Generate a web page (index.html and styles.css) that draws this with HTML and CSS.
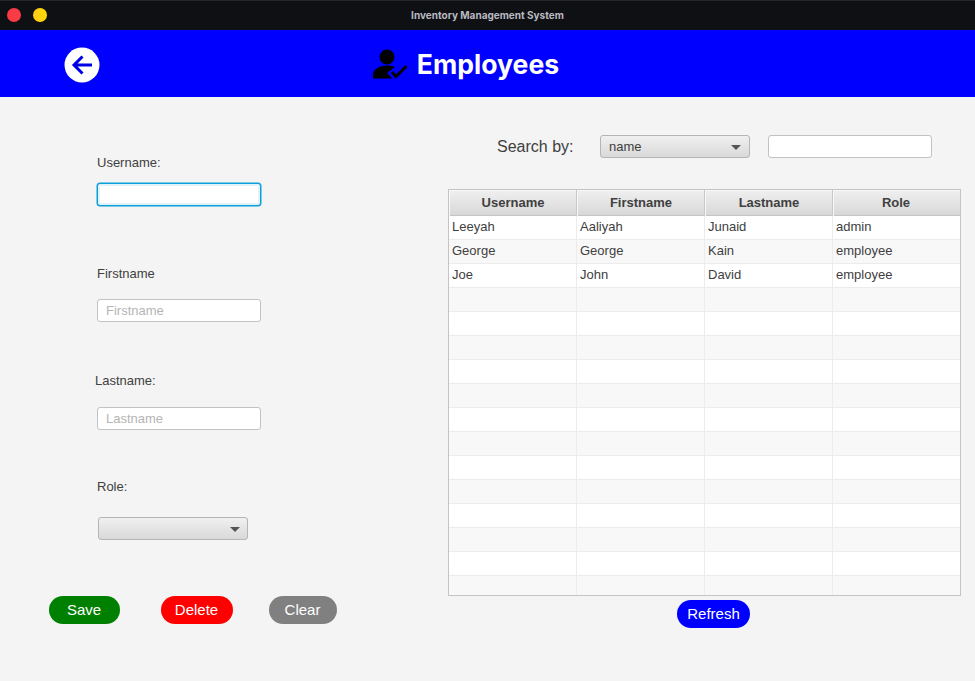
FILE: index.html
```html
<!DOCTYPE html>
<html lang="en">
<head>
<meta charset="utf-8">
<title>Inventory Management System</title>
<link rel="stylesheet" href="styles.css">
</head>
<body>
<div class="titlebar">
  <div class="lights"><span class="light red"></span><span class="light yellow"></span></div>
  <div class="wintitle">Inventory Management System</div>
</div>
<header class="header">
  <svg class="back" width="36" height="36" viewBox="0 0 36 36"><circle cx="18" cy="18" r="17.500" fill="#fff"/><path d="M28 18H11M18.500 9.500L10 18l8.500 8.500" fill="none" stroke="#0000e6" stroke-width="3"/></svg>
  <div class="heading">
    <svg class="usericon" width="36" height="32" viewBox="0 0 36 32"><circle cx="14" cy="8" r="7.500" fill="#000"/><path d="M0 29.500v-4c0-5 6-9 14-9 3 0 6 .5 8 1.500l-8 6 5.500 5.500z" fill="#000"/><path d="M19 23l4 4.500L33.500 17" fill="none" stroke="#000" stroke-width="3"/></svg>
    <h1>Employees</h1>
  </div>
</header>
<main class="main">
  <section class="form">
    <label class="lbl lbl-user">Username:</label>
    <input class="field focus" type="text">
    <label class="lbl lbl-first">Firstname</label>
    <input class="field" type="text" placeholder="Firstname">
    <label class="lbl lbl-last">Lastname:</label>
    <input class="field" type="text" placeholder="Lastname">
    <label class="lbl lbl-role">Role:</label>
    <div class="combo combo-role"><span></span><i class="arrow"></i></div>
    <div class="actions">
      <button class="pill save">Save</button>
      <button class="pill del">Delete</button>
      <button class="pill clear">Clear</button>
    </div>
  </section>
  <section class="side">
    <div class="search">
      <span class="searchlbl">Search by:</span>
      <div class="combo combo-search"><span>name</span><i class="arrow"></i></div>
      <input class="field searchbox" type="text">
    </div>
    <div class="table">
      <div class="row head"><div>Username</div><div>Firstname</div><div>Lastname</div><div>Role</div></div>
      <div class="row"><div>Leeyah</div><div>Aaliyah</div><div>Junaid</div><div>admin</div></div>
      <div class="row"><div>George</div><div>George</div><div>Kain</div><div>employee</div></div>
      <div class="row"><div>Joe</div><div>John</div><div>David</div><div>employee</div></div>
      <div class="row"><div></div><div></div><div></div><div></div></div>
      <div class="row"><div></div><div></div><div></div><div></div></div>
      <div class="row"><div></div><div></div><div></div><div></div></div>
      <div class="row"><div></div><div></div><div></div><div></div></div>
      <div class="row"><div></div><div></div><div></div><div></div></div>
      <div class="row"><div></div><div></div><div></div><div></div></div>
      <div class="row"><div></div><div></div><div></div><div></div></div>
      <div class="row"><div></div><div></div><div></div><div></div></div>
      <div class="row"><div></div><div></div><div></div><div></div></div>
      <div class="row"><div></div><div></div><div></div><div></div></div>
      <div class="row"><div></div><div></div><div></div><div></div></div>
      <div class="row"><div></div><div></div><div></div><div></div></div>
      <div class="row"><div></div><div></div><div></div><div></div></div>
    </div>
    <div class="refreshwrap"><button class="pill refresh">Refresh</button></div>
  </section>
</main>
</body>
</html>
```
FILE: styles.css
```css
* { box-sizing: border-box; }
html, body { margin: 0; height: 100%; }
body {
  width: 975px; height: 681px; overflow: hidden;
  background: #f4f4f4; color: #404040;
  font-family: "Liberation Sans", Arial, sans-serif; font-size: 13px;
  display: flex; flex-direction: column;
}
.titlebar {
  height: 30px; flex: none; background: #0e1014; border-top: 1px solid #24262a;
  display: flex; align-items: center; justify-content: center; position: relative;
}
.lights { position: absolute; left: 7px; top: 7px; display: flex; gap: 12px; }
.light { width: 14px; height: 14px; border-radius: 50%; }
.red { background: #f93b46; }
.yellow { background: linear-gradient(90deg, #ffc91a, #ffdc00); }
.wintitle { font-family: Inter, sans-serif; font-weight: 700; font-size: 10px; color: #b9bac0; margin-top: -2px; }
.header {
  height: 67px; flex: none; background: #0000ff; position: relative;
  display: flex; align-items: center; justify-content: center;
}
.back { position: absolute; left: 64px; top: 17px; }
.heading { display: flex; align-items: center; gap: 8px; margin: 2px 43px 0 0; }
.usericon { display: block; }
.heading h1 { margin: -2px 0 0; font-family: Inter, sans-serif; font-weight: 700; font-size: 26.600px; color: #fff; line-height: 32px; }
.main { flex: 1; display: flex; min-height: 0; }
.form { width: 448px; flex: none; display: flex; flex-direction: column; align-items: flex-start; padding: 58px 0 0 97px; }
.lbl { display: block; font-size: 13px; line-height: 15px; color: #404040; }
.lbl-user { margin-bottom: 13px; }
.lbl-first { margin-top: 60px; margin-bottom: 18px; }
.lbl-last { margin-top: 51px; margin-bottom: 19px; margin-left: -2px; }
.lbl-role { margin-top: 49px; margin-bottom: 23px; }
.field {
  display: block; width: 164px; height: 23px; padding: 0 8px;
  background: #fff; border: 1px solid #c2c2c2; border-radius: 3px;
  font: 13px "Liberation Sans", Arial, sans-serif; color: #404040; outline: none;
}
.field::placeholder { color: #b5b5b5; opacity: 1; }
.focus { border: 1px solid #0a9fd8; box-shadow: 0 0 0 .5px #0a9fd8, inset 0 0 0 2px #e2f2fb; }
.combo {
  height: 23px; display: flex; align-items: center; justify-content: space-between;
  padding: 0 8px; border: 1px solid #b5b5b5; border-radius: 3px;
  background: linear-gradient(#f0f0f0, #d9d9d9); color: #404040;
}
.combo-role { width: 150px; margin-left: 1px; padding-right: 7px; }
.combo-search { width: 150px; }
.arrow { width: 0; height: 0; border-left: 5px solid transparent; border-right: 5px solid transparent; border-top: 5px solid #555; margin-top: 1px; }
.actions { display: flex; margin: 56px 0 0 -48px; }
.pill {
  height: 28px; border: 0; border-radius: 14px; padding: 0 1px 1px 0;
  font: 15px "Liberation Sans", Arial, sans-serif; color: #fff;
}
.save { width: 71px; background: #008000; margin-right: 41px; }
.del { width: 72px; background: #ff0000; margin-right: 36px; }
.clear { width: 68px; background: #808080; }
.side { flex: 1; min-width: 0; }
.search { display: flex; align-items: center; height: 23px; margin-top: 38px; padding-left: 49px; }
.searchlbl { font-size: 16px; width: 103px; color: #404040; }
.searchbox { margin-left: 18px; }
.table {
  width: 513px; height: 407px; margin-top: 31px; overflow: hidden;
  border: 1px solid #c4c4c4; background: #fff;
}
.row { display: grid; grid-template-columns: repeat(4, 128px); height: 24px; background: #fff; border-bottom: 1px solid #ececec; }
.row:nth-child(odd) { background: #f8f8f8; }
.row > div { padding-left: 3px; line-height: 22px; border-right: 1px solid #ececec; color: #404040; }
.row > div:last-child { border-right: 0; }
.row.head { height: 26px; background: linear-gradient(#f0f0f0, #d8d8d8); border-bottom: 1px solid #c4c4c4; }
.row.head > div { padding-left: 1px; text-align: center; font-weight: 700; line-height: 26px; border-right: 1px solid #c8c8c8; box-shadow: inset 1px 1px 0 #f8f8f8; }
.row.head > div:last-child { padding-left: 0; padding-right: 1px; }
.refreshwrap { margin: 4px 0 0 229px; }
.refresh { width: 73px; background: #0000ff; padding: 0 0 2px; }
```
